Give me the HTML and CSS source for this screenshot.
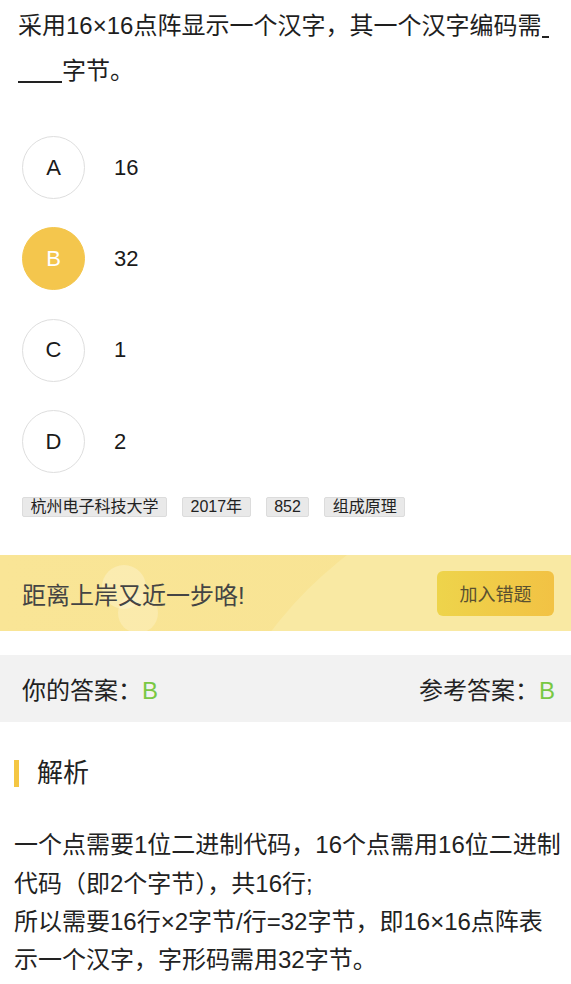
FILE: index.html
```html
<!DOCTYPE html>
<html lang="zh-CN">
<head>
<meta charset="utf-8">
<title>题目</title>
<link rel="stylesheet" href="styles.css">
</head>
<body>
<div class="page">
  <p class="question">采用16×16点阵显示一个汉字，其一个汉字编码需<span class="blank blank-a"></span><span class="blank blank-b"></span>字节。</p>

  <ul class="options">
    <li class="option"><span class="letter">A</span><span class="opt-text">16</span></li>
    <li class="option"><span class="letter selected">B</span><span class="opt-text">32</span></li>
    <li class="option"><span class="letter">C</span><span class="opt-text">1</span></li>
    <li class="option"><span class="letter">D</span><span class="opt-text">2</span></li>
  </ul>

  <div class="tags">
    <span class="tag">杭州电子科技大学</span>
    <span class="tag">2017年</span>
    <span class="tag">852</span>
    <span class="tag">组成原理</span>
  </div>

  <div class="banner">
    <span class="deco deco-1"></span>
    <span class="deco deco-2"></span>
    <span class="deco deco-arc"></span>
    <span class="banner-text">距离上岸又近一步咯!</span>
    <span class="banner-btn">加入错题</span>
  </div>

  <div class="answers">
    <span class="ans">你的答案：<em class="ans-val">B</em></span>
    <span class="ans">参考答案：<em class="ans-val">B</em></span>
  </div>

  <h2 class="section-title">解析</h2>
  <p class="analysis">一个点需要1位二进制代码，16个点需用16位二进制代码（即2个字节），共16行;<br>所以需要16行×2字节/行=32字节，即16×16点阵表示一个汉字，字形码需用32字节。</p>
</div>
</body>
</html>
```

FILE: styles.css
```css
* { box-sizing: border-box; }
html, body { margin: 0; padding: 0; background: #fff; }
body {
  font-family: "Liberation Sans", Arial, "Noto Sans CJK SC", sans-serif;
  color: #222;
}
.page { width: 571px; overflow: hidden; }

.question {
  margin: 0;
  padding: 3px 18px 0 18px;
  font-size: 24px;
  line-height: 45px;
  color: #1e1e1e;
}
.blank {
  display: inline-block;
  height: 2px;
  background: #222;
  vertical-align: -4px;
}
.blank-a { width: 7px; margin-left: 1px; }
.blank-b { width: 44px; }

.options {
  list-style: none;
  margin: 0;
  padding: 43px 0 0 22px;
  display: flex;
  flex-direction: column;
  gap: 28.4px;
}
.option {
  display: flex;
  align-items: center;
  gap: 29px;
}
.letter {
  width: 63px;
  height: 63px;
  border-radius: 50%;
  border: 1px solid #dedede;
  display: flex;
  align-items: center;
  justify-content: center;
  font-size: 22px;
  color: #1a1a1a;
}
.letter.selected {
  background: #f4c64d;
  border-color: #f4c64d;
  color: #fff;
}
.opt-text { font-size: 22px; color: #1a1a1a; }

.tags {
  display: flex;
  gap: 15px;
  padding: 24px 0 0 22px;
}
.tag {
  font-size: 16px;
  line-height: 18px;
  padding: 0 7.5px;
  background: #e9e9e9;
  border: 1px solid #dcdcdc;
  border-radius: 2px;
  color: #222;
}

.banner {
  position: relative;
  overflow: hidden;
  margin-top: 38px;
  height: 76px;
  background: linear-gradient(90deg, #f9e596 0%, #f8e393 100%);
  display: flex;
  align-items: center;
  justify-content: space-between;
  padding: 0 17px 0 22px;
}
.deco {
  position: absolute;
  border-radius: 50%;
}
.deco-1 {
  width: 44px; height: 44px;
  left: 102px; top: 10px;
  background: rgba(255, 250, 225, 0.35);
}
.deco-2 {
  width: 40px; height: 40px;
  left: 118px; top: 38px;
  background: rgba(255, 250, 225, 0.3);
}
.deco-arc {
  width: 810px; height: 810px;
  left: 189px; top: -84px;
  background: radial-gradient(circle at center, #f9e9a3 0%, #f9e9a3 96%, #f3dc85 100%);
}
.banner-text {
  position: relative;
  font-size: 24px;
  color: #444;
}
.banner-btn {
  position: relative;
  width: 117px;
  height: 45px;
  border-radius: 6px;
  background: linear-gradient(90deg, #eed44b 0%, #f2c244 100%);
  display: flex;
  align-items: center;
  justify-content: center;
  font-size: 18px;
  color: #5a5030;
}

.answers {
  margin-top: 24px;
  height: 67px;
  background: #f2f2f2;
  display: flex;
  align-items: center;
  justify-content: space-between;
  padding: 0 16px 0 22px;
  font-size: 24px;
  color: #222;
}
.ans-val { font-style: normal; color: #79c843; }

.section-title {
  margin: 38px 0 0 14px;
  padding-left: 18px;
  border-left: 5px solid #f4c643;
  font-size: 26px;
  font-weight: normal;
  line-height: 27px;
  color: #222;
}

.analysis {
  margin: 0;
  padding: 39px 6px 0 14px;
  font-size: 24px;
  line-height: 38.4px;
  color: #222;
}
```
